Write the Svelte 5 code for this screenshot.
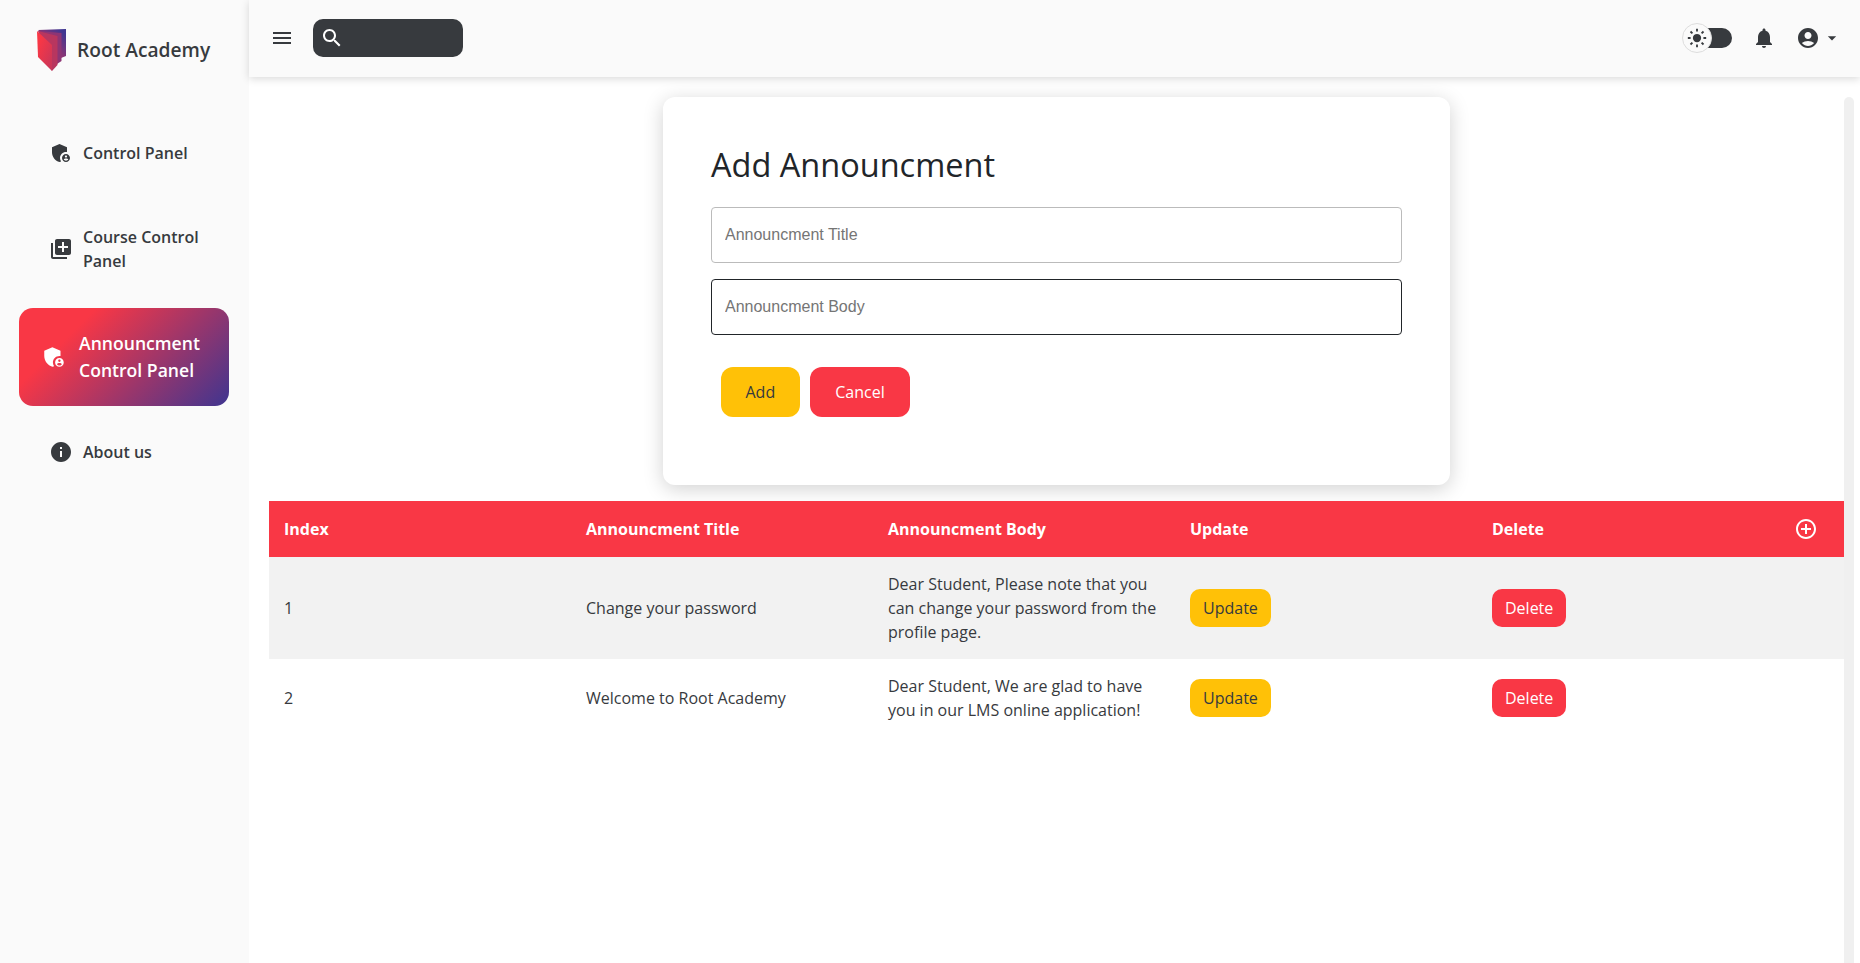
<script>
    const icons = {
        shield: 'M17,11c0.34,0,0.67,0.04,1,0.09V6.27L10.5,3L3,6.27v4.91c0,4.54,3.2,8.79,7.5,9.82c0.55-0.13,1.08-0.32,1.6-0.55 C11.41,19.47,11,18.28,11,17C11,13.69,13.69,11,17,11z M17,13c-2.21,0-4,1.79-4,4c0,2.21,1.79,4,4,4s4-1.79,4-4C21,14.79,19.21,13,17,13z M17,14.38c0.62,0,1.12,0.51,1.12,1.12s-0.51,1.12-1.12,1.12s-1.12-0.51-1.12-1.12S16.38,14.38,17,14.38z M17,19.75c-0.93,0-1.74-0.46-2.24-1.17c0.05-0.72,1.51-1.08,2.24-1.08s2.19,0.36,2.24,1.08C18.74,19.29,17.93,19.75,17,19.75z',
        library: 'M4 6H2v14c0 1.1.9 2 2 2h14v-2H4V6zm16-4H8c-1.1 0-2 .9-2 2v12c0 1.1.9 2 2 2h12c1.1 0 2-.9 2-2V4c0-1.1-.9-2-2-2zm-1 9h-4v4h-2v-4H9V9h4V5h2v4h4v2z',
        info: 'M12 2C6.48 2 2 6.48 2 12s4.48 10 10 10 10-4.48 10-10S17.52 2 12 2zm1 15h-2v-6h2v6zm0-8h-2V7h2v2z',
        menu: 'M3 18h18v-2H3v2zm0-5h18v-2H3v2zm0-7v2h18V6H3z',
        search: 'M15.5 14h-.79l-.28-.27C15.41 12.59 16 11.11 16 9.5 16 5.91 13.09 3 9.5 3S3 5.91 3 9.5 5.91 16 9.5 16c1.61 0 3.09-.59 4.23-1.57l.27.28v.79l5 4.99L20.49 19l-4.99-5zm-6 0C7.01 14 5 11.99 5 9.5S7.01 5 9.5 5 14 7.01 14 9.5 11.99 14 9.5 14z',
        bell: 'M12 22c1.1 0 2-.9 2-2h-4c0 1.1.89 2 2 2zm6-6v-5c0-3.07-1.64-5.64-4.5-6.32V4c0-.83-.67-1.5-1.5-1.5s-1.5.67-1.5 1.5v.68C7.63 5.36 6 7.92 6 11v5l-2 2v1h16v-1l-2-2z',
        account: 'M12 2C6.48 2 2 6.48 2 12s4.48 10 10 10 10-4.48 10-10S17.52 2 12 2zm0 4c1.93 0 3.5 1.57 3.5 3.5S13.93 13 12 13s-3.5-1.57-3.5-3.5S10.07 6 12 6zm0 14c-2.03 0-4.43-.82-6.14-2.88C7.55 15.8 9.68 15 12 15s4.45.8 6.14 2.12C16.43 19.18 14.03 20 12 20z',
        caret: 'M7 10l5 5 5-5z',
        add: 'M13 7h-2v4H7v2h4v4h2v-4h4v-2h-4V7zm-1-5C6.48 2 2 6.48 2 12s4.48 10 10 10 10-4.48 10-10S17.52 2 12 2zm0 18c-4.41 0-8-3.59-8-8s3.59-8 8-8 8 3.59 8 8-3.59 8-8 8z'
    };

    const nav = [
        { icon: 'shield', label: 'Control Panel' },
        { icon: 'library', label: 'Course Control Panel' },
        { icon: 'shield', label: 'Announcment Control Panel', active: true },
        { icon: 'info', label: 'About us' }
    ];

    const rows = [
        { title: 'Change your password', body: 'Dear Student, Please note that you can change your password from the profile page.' },
        { title: 'Welcome to Root Academy', body: 'Dear Student, We are glad to have you in our LMS online application!' }
    ];
</script>

<div class="page">
    <aside class="sidebar">
        <div class="brand">
            <svg class="logo" viewBox="0 0 30 42" width="30" height="42">
                <defs>
                    <linearGradient id="logoFront" x1="0" y1="0" x2="1" y2="1">
                        <stop offset="0.2" stop-color="#f93745" />
                        <stop offset="1" stop-color="#c4365c" />
                    </linearGradient>
                    <linearGradient id="logoBack" x1="0" y1="1" x2="1" y2="0">
                        <stop offset="0.3" stop-color="#a8356a" />
                        <stop offset="0.9" stop-color="#3f3590" />
                    </linearGradient>
                </defs>
                <path d="M1 1 L29 0 L29 27 L24 29 L21 20 Z" fill="url(#logoBack)" />
                <path d="M1 2 L24.5 4 L24.5 32 L20 35 L17 20 Z" fill="#8e3574" />
                <path d="M1 2 L20.5 7 L20.5 36 L15 42 Z" fill="#b8365f" />
                <path d="M0 2 L15 16 L15 42 L1 28 Z" fill="url(#logoFront)" />
            </svg>
            <span>Root Academy</span>
        </div>
        <nav class="menu">
            {#each nav as item}
                <a class="nav-item" class:active={item.active} href="#top">
                    <svg class="nav-icon" viewBox="0 0 24 24"><path d={icons[item.icon]} /></svg>
                    <span>{item.label}</span>
                </a>
            {/each}
        </nav>
    </aside>

    <div class="right">
        <header class="topbar">
            <svg class="menu-btn" viewBox="0 0 24 24"><path d={icons.menu} /></svg>
            <div class="search">
                <svg viewBox="0 0 24 24"><path d={icons.search} /></svg>
            </div>
            <div class="spacer"></div>
            <div class="toggle">
                <div class="knob">
                    <svg viewBox="0 0 24 24">
                        <circle cx="12" cy="12" r="4.5" />
                        <g class="rays">
                            <path d="M12 2v3M12 19v3M2 12h3M19 12h3M4.9 4.9l2.1 2.1M17 17l2.1 2.1M4.9 19.1L7 17M17 7l2.1-2.1" />
                        </g>
                    </svg>
                </div>
            </div>
            <svg class="top-icon bell" viewBox="0 0 24 24"><path d={icons.bell} /></svg>
            <svg class="top-icon" viewBox="0 0 24 24"><path d={icons.account} /></svg>
            <svg class="caret" viewBox="0 0 24 24"><path d={icons.caret} /></svg>
        </header>

        <div class="body">
            <main class="content">
                <section class="card">
                    <h1>Add Announcment</h1>
                    <input class="field" type="text" placeholder="Announcment Title" />
                    <input class="field focused" type="text" placeholder="Announcment Body" />
                    <div class="actions">
                        <button class="btn yellow">Add</button>
                        <button class="btn red">Cancel</button>
                    </div>
                </section>

                <table>
                    <thead>
                        <tr>
                            <th>Index</th>
                            <th>Announcment Title</th>
                            <th>Announcment Body</th>
                            <th>Update</th>
                            <th>Delete</th>
                            <th class="plus">
                                <svg viewBox="0 0 24 24"><path d={icons.add} /></svg>
                            </th>
                        </tr>
                    </thead>
                    <tbody>
                        {#each rows as row, i}
                            <tr>
                                <td>{i + 1}</td>
                                <td>{row.title}</td>
                                <td>{row.body}</td>
                                <td><button class="btn small yellow">Update</button></td>
                                <td><button class="btn small red">Delete</button></td>
                                <td></td>
                            </tr>
                        {/each}
                    </tbody>
                </table>
            </main>
            <div class="track"></div>
        </div>
    </div>
</div>

<style>
    :global(body) {
        margin: 0;
        background: #fff;
        font-family: 'Open Sans', 'Noto Sans', sans-serif;
        color: #212529;
    }

    .page {
        display: flex;
        height: 963px;
        overflow: hidden;
    }

    .sidebar {
        width: 249px;
        flex-shrink: 0;
        background: #fafafa;
    }

    .brand {
        display: flex;
        align-items: center;
        gap: 10px;
        height: 42px;
        padding: 28px 0 0 37px;
        font-size: 19.2px;
        font-weight: 600;
        color: #373a3e;
    }

    .logo {
        flex-shrink: 0;
        margin-top: 2px;
    }

    .menu {
        display: flex;
        flex-direction: column;
        margin-top: 54px;
        padding: 0 20px 0 19px;
    }

    .nav-item {
        display: flex;
        align-items: center;
        gap: 10px;
        padding: 17px 20px 17px 30px;
        margin-bottom: 17px;
        font-size: 16px;
        font-weight: 600;
        line-height: 24px;
        color: #373a3e;
        text-decoration: none;
        border-radius: 14px;
    }

    .nav-item:first-child {
        margin-bottom: 26px;
    }

    .nav-item.active {
        margin-top: 1px;
        padding: 22px 20px 22px 22px;
        gap: 12px;
        font-size: 17.6px;
        line-height: 27px;
        color: #fff;
        background: linear-gradient(135deg, #f93745 25%, #3f3590 100%);
    }

    .nav-icon {
        width: 24px;
        height: 24px;
        flex-shrink: 0;
        fill: currentColor;
    }

    .active .nav-icon {
        width: 26px;
        height: 26px;
    }

    .right {
        flex: 1;
        min-width: 0;
        display: flex;
        flex-direction: column;
    }

    .topbar {
        display: flex;
        align-items: center;
        height: 77px;
        padding: 0 18px 1px 21px;
        background: #fafafa;
        box-shadow: 0 2px 8px rgba(0, 0, 0, 0.15);
        box-sizing: border-box;
        position: relative;
    }

    .topbar svg {
        fill: #373a3e;
    }

    .menu-btn {
        width: 24px;
        height: 24px;
        margin-right: 19px;
    }

    .search {
        display: flex;
        align-items: center;
        width: 150px;
        height: 38px;
        padding-left: 7px;
        box-sizing: border-box;
        background: #373a3e;
        border-radius: 10px;
    }

    .search svg {
        width: 24px;
        height: 24px;
        fill: #fff;
    }

    .spacer {
        flex: 1;
    }

    .toggle {
        position: relative;
        width: 35px;
        height: 20px;
        margin-right: 20px;
        background: #373a3e;
        border-radius: 0 10px 10px 0;
    }

    .knob {
        position: absolute;
        left: -15px;
        top: -5px;
        width: 30px;
        height: 30px;
        box-sizing: border-box;
        display: flex;
        align-items: center;
        justify-content: center;
        background: #fafafa;
        border: 1px solid #ddd;
        border-radius: 50%;
    }

    .knob svg {
        width: 22px;
        height: 22px;
    }

    .rays path {
        fill: none;
        stroke: #373a3e;
        stroke-width: 2;
    }

    .top-icon {
        width: 24px;
        height: 24px;
    }

    .bell {
        margin-right: 20px;
    }

    .caret {
        width: 20px;
        height: 20px;
        margin-left: 2px;
    }

    .body {
        flex: 1;
        min-height: 0;
        display: flex;
        padding: 20px 6px 0 20px;
    }

    .content {
        flex: 1;
        min-width: 0;
    }

    .track {
        width: 10px;
        flex-shrink: 0;
        background: #f0f0f0;
        border-radius: 5px 5px 0 0;
    }

    .card {
        width: 787px;
        height: 388px;
        margin: 0 auto 16px;
        padding: 47px 48px 48px;
        box-sizing: border-box;
        background: #fff;
        border-radius: 12px;
        box-shadow: 0 4px 20px rgba(0, 0, 0, 0.18);
    }

    h1 {
        margin: 0 0 21px;
        font-size: 32.5px;
        font-weight: 400;
        line-height: 42px;
    }

    .field {
        display: block;
        width: 100%;
        height: 56px;
        margin-bottom: 16px;
        padding: 0 13px;
        box-sizing: border-box;
        border: 1px solid #bbb;
        border-radius: 4px;
        outline: none;
        background: #fff;
        font-family: 'Liberation Sans', Arial, sans-serif;
        font-size: 16px;
    }

    .field.focused {
        border-color: #212529;
    }

    .field::placeholder {
        color: #757575;
    }

    .actions {
        display: flex;
        gap: 10px;
        margin: 32px 0 0 10px;
    }

    .btn {
        height: 50px;
        padding: 0 24.5px;
        border: 0;
        border-radius: 12px;
        font-family: inherit;
        font-size: 16px;
    }

    .actions .red {
        padding: 0 25.5px;
    }

    .btn.small {
        height: 38px;
        padding: 0 13px;
        border-radius: 10px;
        display: block;
    }

    .yellow {
        background: #ffc107;
        color: #373a3e;
    }

    .red {
        background: #f93745;
        color: #fff;
    }

    table {
        width: 1575px;
        table-layout: fixed;
        border-collapse: collapse;
        font-size: 16px;
        line-height: 24px;
    }

    th {
        width: 302px;
        height: 56px;
        padding: 0 15px;
        box-sizing: border-box;
        text-align: left;
        font-weight: 700;
        color: #fff;
        background: #f93745;
    }

    th.plus {
        width: 65px;
    }

    .plus svg {
        display: block;
        width: 24px;
        height: 24px;
        fill: #fff;
    }

    td {
        padding: 15px;
        color: #373a3e;
    }

    tbody tr:nth-child(odd) {
        background: #f2f2f2;
    }
</style>
